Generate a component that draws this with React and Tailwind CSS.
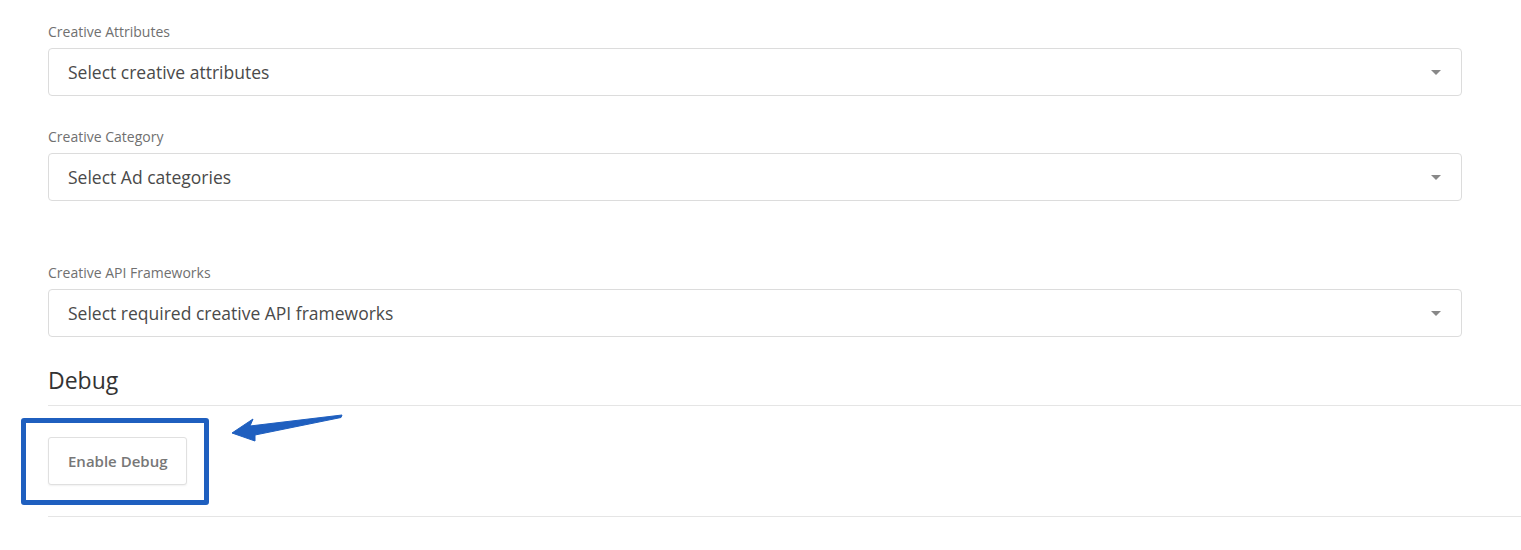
import React from 'react';

function SelectField({ label, placeholder, className = '' }) {
  return (
    <div className={className}>
      <label className="block text-[14px] leading-5 text-[#707070]">{label}</label>
      <div className="mt-[6px] flex h-[48px] w-[1414px] items-center justify-between rounded-[4px] border border-[#dcdcdc] bg-white pl-[19px] pr-[20px]">
        <span className="text-[17.5px] text-[#4a4a4a]">{placeholder}</span>
        <span className="h-0 w-0 border-x-[5px] border-t-[5px] border-x-transparent border-t-[#888]" />
      </div>
    </div>
  );
}

export default function App() {
  return (
    <div className="min-h-[550px] w-full bg-white pt-[22px] font-['Open_Sans','Noto_Sans',sans-serif]">
      <div className="pl-12">
        <SelectField label="Creative Attributes" placeholder="Select creative attributes" />
        <SelectField className="mt-[31px]" label="Creative Category" placeholder="Select Ad categories" />
        <SelectField className="mt-[62px]" label="Creative API Frameworks" placeholder="Select required creative API frameworks" />
        <h2 className="mt-[28px] text-[23px] leading-[30px] text-[#333]">Debug</h2>
      </div>
      <div className="ml-12 mt-[10px] border-t border-[#e5e5e5]" />
      <div className="relative pl-12 pt-[31px] pb-[31px]">
        <button className="rounded-[3px] border border-[#e0e0e0] bg-white px-[19px] h-[48px] text-[15px] font-semibold text-[#777] shadow-[0_1px_2px_rgba(0,0,0,0.06)]">
          Enable Debug
        </button>
        <div className="pointer-events-none absolute left-[21px] top-[12px] h-[87px] w-[188px] rounded-[3px] border-[5px] border-[#1f5fbf]" />
        <svg className="absolute left-[228px] top-[5px]" width="118" height="36" viewBox="0 0 118 36">
          <path d="M4,22 L25,8 L22,15 L114,4 L113,6.5 L27,24 L27,30 Z" fill="#1f5fbf" stroke="#1f5fbf" strokeWidth="1" strokeLinejoin="round" />
        </svg>
      </div>
      <div className="ml-12 border-t border-[#e5e5e5]" />
    </div>
  );
}
